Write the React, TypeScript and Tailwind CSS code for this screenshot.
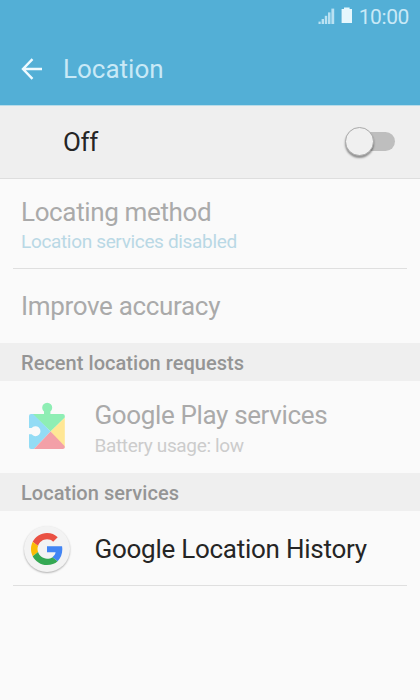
import React from "react";

function SignalIcon() {
  return (
    <svg width="17" height="17" viewBox="0 0 17 17" fill="#b9e1f2">
      <rect x="0.5" y="13.6" width="2.2" height="2.4" />
      <rect x="3.6" y="11" width="2.4" height="5" />
      <rect x="6.8" y="7.8" width="2.4" height="8.2" />
      <rect x="10" y="4.4" width="2.5" height="11.6" />
      <rect x="13.4" y="0.6" width="2.8" height="15.4" />
    </svg>
  );
}

function BatteryIcon() {
  return (
    <svg width="12" height="17" viewBox="0 0 12 17" fill="#e6f7fd">
      <path d="M3 0.4h5.6v1.5H11V16H0.6V1.9H3z" />
    </svg>
  );
}

function PlayServicesIcon() {
  return (
    <svg width="38" height="48" viewBox="0 0 38 48">
      <defs>
        <clipPath id="piece">
          <path d="M3 12H16V9.600A5 5 0 1 1 22.400 9.600V12H34.800a2 2 0 0 1 2 2V45a2 2 0 0 1-2 2H3a2 2 0 0 1-2-2V32.300H3.600A5 5 0 1 0 3.600 26H1V14a2 2 0 0 1 2-2z" />
        </clipPath>
      </defs>
      <g clipPath="url(#piece)">
        <path d="M0 0H38V14.500L22.600 29.500L3 11z" fill="#8eeeb4" />
        <path d="M0 9V48H5L22.600 29.500L3 10z" fill="#93dcf5" />
        <path d="M38 14.500V48L22.600 29.500z" fill="#ffe795" />
        <path d="M5 48L22.600 29.500L38 45.500V48z" fill="#f3a0a8" />
      </g>
    </svg>
  );
}

function GoogleIcon() {
  return (
    <svg width="32" height="32" viewBox="0 0 48 48">
      <path fill="#ea5143" d="M24 9.500c3.540 0 6.710 1.220 9.210 3.600l6.850-6.850C35.900 2.380 30.470 0 24 0 14.620 0 6.510 5.380 2.560 13.220l7.980 6.190C12.430 13.720 17.740 9.500 24 9.500z" />
      <path fill="#4285f4" d="M46.980 24.550c0-1.570-.15-3.090-.38-4.550H24v9.020h12.940c-.58 2.960-2.260 5.480-4.780 7.180l7.730 6c4.510-4.180 7.090-10.360 7.090-17.650z" />
      <path fill="#fbbc05" d="M10.530 28.590c-.48-1.450-.76-2.990-.76-4.590s.27-3.140.76-4.590l-7.980-6.190C.92 16.460 0 20.120 0 24c0 3.880.92 7.540 2.560 10.780l7.970-6.190z" />
      <path fill="#34a853" d="M24 48c6.480 0 11.930-2.130 15.890-5.810l-7.730-6c-2.150 1.450-4.920 2.300-8.160 2.300-6.260 0-11.570-4.220-13.470-9.910l-7.980 6.190C6.510 42.620 14.620 48 24 48z" />
    </svg>
  );
}

function SectionHeader({ children }: { children: React.ReactNode }) {
  return (
    <h2 className="h-[38px] bg-[#efefef] pl-[21px] pt-[4px] text-[20px] leading-8 font-medium tracking-[0.04px] text-[#959595]">
      {children}
    </h2>
  );
}

export default function App() {
  return (
    <div className="flex h-[700px] w-[420px] flex-col overflow-hidden bg-[#fafafa] font-['Roboto',sans-serif] whitespace-nowrap">
      <header className="h-[106px] shrink-0 border-b border-[#b9dce9] bg-[#53afd6]">
        <div className="flex h-8 items-start justify-end pr-[11px]">
          <div className="mt-[8px] mr-[6px]"><SignalIcon /></div>
          <div className="mt-[7px] mr-[6px]"><BatteryIcon /></div>
          <span className="mt-[1px] text-[21px] leading-8 tracking-[-0.4px] text-[#c9e9f6]">10:00</span>
        </div>
        <div className="flex h-[73px] items-center pl-[21px]">
          <svg width="22" height="22" viewBox="0 0 22 22" fill="none" stroke="#effaff" strokeWidth="2.4">
            <path d="M11.500 1.200L2 11L11.500 20.800M2 11H21" />
          </svg>
          <h1 className="ml-[20px] text-[26px] leading-8 text-[#c9e9f6]">Location</h1>
        </div>
      </header>

      <div className="flex h-[73px] shrink-0 items-center justify-between border-b border-[#dedede] bg-[#efefef] pr-[25px] pl-[63px]">
        <span className="text-[26px] leading-8 tracking-[-0.4px] text-[#252525]">Off</span>
        <button aria-label="Location" className="flex h-[30px] w-[50px] items-center">
          <span className="z-10 -mt-[2px] size-[29px] shrink-0 rounded-full border border-[#aaa] bg-[#f0f0f0] shadow-[0_2px_2px_rgba(0,0,0,0.4)]" />
          <span className="-ml-[14px] -mt-px h-[19px] w-[35px] shrink-0 rounded-full bg-[#bebebe]" />
        </button>
      </div>

      <div className="mx-[13px] h-[90px] shrink-0 border-b border-[#dfdfdf] pt-[17px] pl-[8px]">
        <div className="text-[26px] leading-8 tracking-[-0.36px] text-[#aaaaaa]">Locating method</div>
        <div className="pt-px text-[19px] leading-[26px] tracking-[-0.34px] text-[#b9d8e5]">Location services disabled</div>
      </div>
      <div className="flex h-[74px] shrink-0 items-center pl-[21px] text-[26px] leading-8 tracking-[-0.33px] text-[#aaaaaa]">
        Improve accuracy
      </div>

      <SectionHeader>Recent location requests</SectionHeader>
      <div className="flex h-[92px] shrink-0 pl-[28px]">
        <div className="mt-[21px] w-[67px]"><PlayServicesIcon /></div>
        <div className="-ml-[0.5px] pt-[18px]">
          <div className="text-[26px] leading-8 tracking-[-0.36px] text-[#aaaaaa]">Google Play services</div>
          <div className="pt-[2px] text-[19px] leading-[26px] tracking-[-0.34px] text-[#cccccc]">Battery usage: low</div>
        </div>
      </div>

      <SectionHeader>Location services</SectionHeader>
      <div className="mx-[13px] flex h-[75px] shrink-0 items-center border-b border-[#dfdfdf] pt-[2px] pl-[11px]">
        <div className="mr-[24.500px] flex size-[46px] items-center justify-center rounded-full bg-[#f3f3f3] shadow-[0_1px_2px_rgba(0,0,0,0.3)]">
          <GoogleIcon />
        </div>
        <span className="text-[26px] leading-8 tracking-[-0.26px] text-[#252525]">Google Location History</span>
      </div>
    </div>
  );
}
